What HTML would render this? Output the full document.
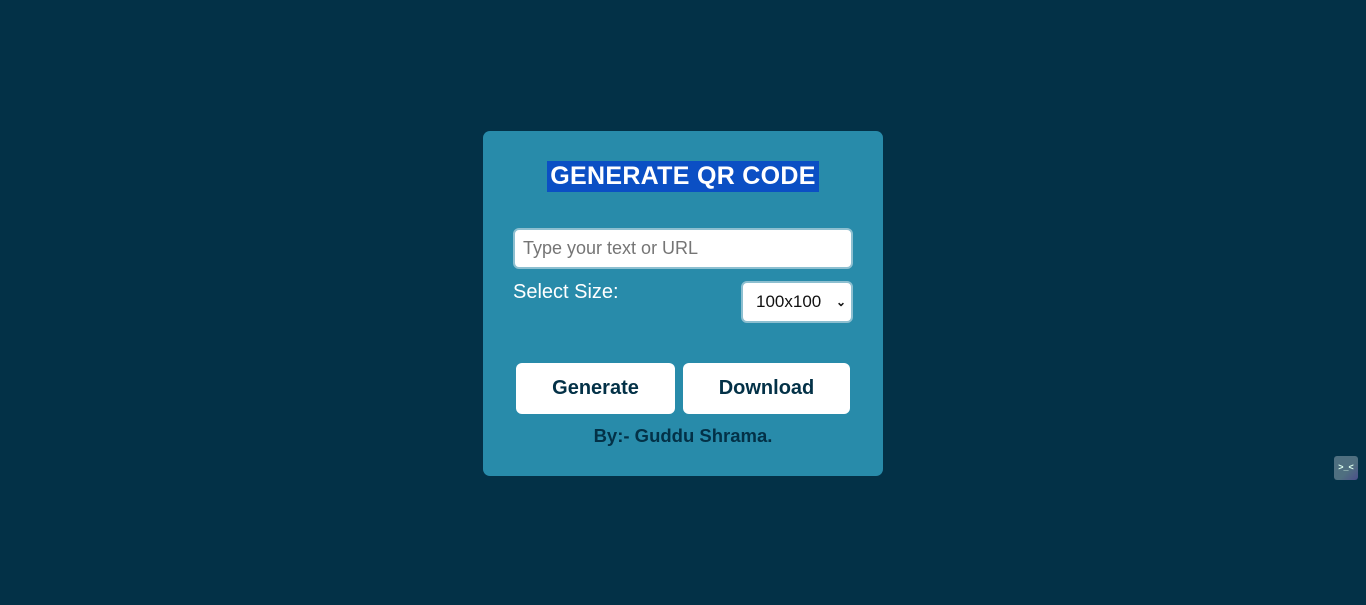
<!DOCTYPE html>
<html><head><style>
body{margin:0;width:1366px;height:605px;background:#033147;font-family:"Liberation Sans",sans-serif;position:relative;overflow:hidden}
.card{position:absolute;left:483px;top:131px;width:400px;height:345px;background:#288baa;border-radius:7px}
h1{position:absolute;left:547px;top:161px;width:272px;height:31px;margin:0;background:#0b4fc4;color:#fff;font-size:25px;font-weight:bold;line-height:31px;text-align:center;letter-spacing:0.3px;white-space:nowrap}
.inp{position:absolute;left:513px;top:228px;height:37px;background:#fff;border:2px solid #8dbfd0;border-radius:6px;color:#757575;font-size:18px;line-height:37px;padding-left:8px;width:328px}
.lbl{position:absolute;left:513px;top:281px;color:#fff;font-size:20px}
.sel{position:absolute;left:741px;top:281px;background:#fff;border:2px solid #8dbfd0;border-radius:6px;font-size:17px;color:#111;line-height:38px;padding-left:13px;box-sizing:border-box;width:112px;height:42px}
.sel span{position:absolute;right:5px;top:0;font-size:12px;font-weight:bold}
.btn{position:absolute;top:363px;height:51px;background:#fff;border-radius:6px;color:#033147;font-size:20px;font-weight:bold;text-align:center;line-height:51px}
.by{position:absolute;left:483px;width:400px;top:425px;text-align:center;color:#033147;font-size:18.5px;font-weight:bold}
.ic{position:absolute;left:1334px;top:456px;width:24px;height:24px;border-radius:3px;background:linear-gradient(135deg,#4f6f80 60%,#4c4f8a);color:#dfe;font-size:9px;font-weight:bold;text-align:center;line-height:22px}
</style></head><body>
<div class="card"></div>
<h1>GENERATE QR CODE</h1>
<div class="inp">Type your text or URL</div>
<div class="lbl">Select Size:</div>
<div class="sel">100x100<span>&#8964;</span></div>
<div class="btn" style="left:516px;width:159px">Generate</div>
<div class="btn" style="left:683px;width:167px">Download</div>
<div class="by">By:- Guddu Shrama.</div>
<div class="ic">&gt;_&lt;</div>
</body></html>
